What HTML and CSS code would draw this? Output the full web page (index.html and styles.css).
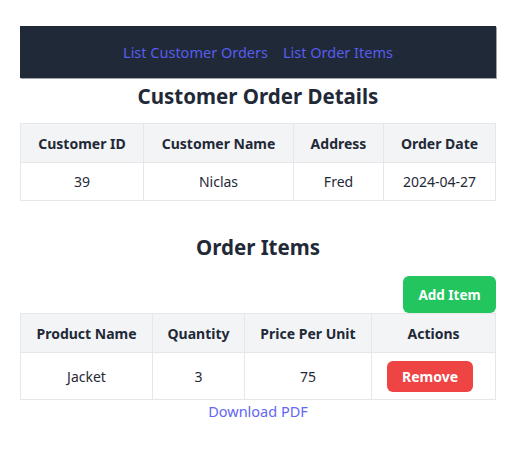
FILE: index.html
```html
<!DOCTYPE html>
<html>
<head>
<meta charset="utf-8">
<link rel="stylesheet" href="styles.css">
</head>
<body>
<div class="page">
  <nav class="nav">
    <a href="#" class="nav-link">List Customer Orders</a>
    <a href="#" class="nav-link">List Order Items</a>
  </nav>
  <h1 class="title">Customer Order Details</h1>
  <table class="tbl">
    <thead>
      <tr><th class="c1">Customer ID</th><th class="c2">Customer Name</th><th class="c3">Address</th><th class="c4">Order Date</th></tr>
    </thead>
    <tbody>
      <tr><td>39</td><td>Niclas</td><td>Fred</td><td>2024-04-27</td></tr>
    </tbody>
  </table>
  <h2 class="title title2">Order Items</h2>
  <div class="toolbar"><button class="btn btn-green">Add Item</button></div>
  <table class="tbl tbl2">
    <thead>
      <tr><th class="d1">Product Name</th><th class="d2">Quantity</th><th class="d3">Price Per Unit</th><th class="d4">Actions</th></tr>
    </thead>
    <tbody>
      <tr><td>Jacket</td><td>3</td><td>75</td><td class="act"><button class="btn btn-red">Remove</button></td></tr>
    </tbody>
  </table>
  <div class="download"><a href="#" class="dl-link">Download PDF</a></div>
</div>
</body>
</html>
```
FILE: styles.css
```css
html, body { margin: 0; padding: 0; background: #fff; }
body { font-family: "Noto Sans", "Open Sans", sans-serif; color: #1f2937; }
.page { width: 476px; margin: 26px 0 0 20px; }
.nav {
  background: #1f2937;
  height: 52px;
  display: flex;
  justify-content: center;
  align-items: center;
  gap: 15px;
  box-shadow: 1px 1px 0 #9ca3af;
}
.nav-link { color: #585cf0; text-decoration: none; font-size: 14.5px; }
.title { margin: 0; font-size: 20.5px; font-weight: 700; text-align: center; line-height: 36px; padding: 0 0 9px; }
.tbl { width: 100%; border-collapse: collapse; font-size: 14px; }
.tbl th, .tbl td { border: 1px solid #e5e7eb; text-align: center; padding: 0; }
.tbl th { background: #f3f4f6; font-weight: 700; height: 38px; }
.tbl td { height: 37px; color: #1f2937; }
.c1 { width: 122px; } .c2 { width: 149px; } .c3 { width: 89px; }
.d1 { width: 131px; } .d2 { width: 91px; } .d3 { width: 126px; }
.tbl2 td { height: 46px; }
.tbl2 td.act { padding-right: 7px; }
.title2 { margin-top: 28px; padding-bottom: 0; }
.toolbar { display: flex; justify-content: flex-end; margin-top: 11px; }
.btn { border: none; color: #fff; font-family: inherit; font-weight: 700; font-size: 13.5px; border-radius: 6px; }
.btn-green { background: #22c55e; width: 93px; height: 37px; }
.btn-red { background: #ef4444; width: 86px; height: 31px; font-size: 14px; }
.download { text-align: center; margin-top: 0; }
.dl-link { color: #6366f1; text-decoration: none; font-size: 14.5px; }
```
